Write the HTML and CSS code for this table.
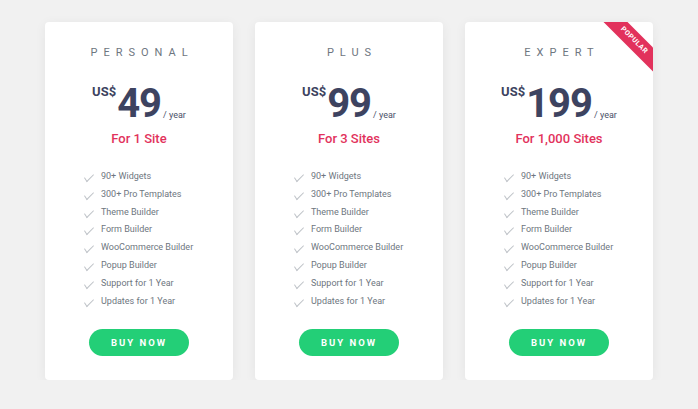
FILE: index.html
```html
<!DOCTYPE html>
<html lang="en">
<head>
  <meta charset="UTF-8" />
  <title>Pricing</title>
  <link rel="stylesheet" href="styles.css">
</head>
<body>
  <div class="plans">
    <div class="card">
      <h3 class="plan-name">Personal</h3>
      <div class="price"><span class="cur">US$</span><span class="amount">49</span><span class="per">/ year</span></div>
      <p class="sites">For 1 Site</p>
      <ul class="features">
        <li>90+ Widgets</li>
        <li>300+ Pro Templates</li>
        <li>Theme Builder</li>
        <li>Form Builder</li>
        <li>WooCommerce Builder</li>
        <li>Popup Builder</li>
        <li>Support for 1 Year</li>
        <li>Updates for 1 Year</li>
      </ul>
      <a class="buy" href="#">Buy Now</a>
    </div>

    <div class="card">
      <h3 class="plan-name">Plus</h3>
      <div class="price"><span class="cur">US$</span><span class="amount">99</span><span class="per">/ year</span></div>
      <p class="sites">For 3 Sites</p>
      <ul class="features">
        <li>90+ Widgets</li>
        <li>300+ Pro Templates</li>
        <li>Theme Builder</li>
        <li>Form Builder</li>
        <li>WooCommerce Builder</li>
        <li>Popup Builder</li>
        <li>Support for 1 Year</li>
        <li>Updates for 1 Year</li>
      </ul>
      <a class="buy" href="#">Buy Now</a>
    </div>

    <div class="card">
      <div class="ribbon">Popular</div>
      <h3 class="plan-name">Expert</h3>
      <div class="price"><span class="cur">US$</span><span class="amount">199</span><span class="per">/ year</span></div>
      <p class="sites">For 1,000 Sites</p>
      <ul class="features">
        <li>90+ Widgets</li>
        <li>300+ Pro Templates</li>
        <li>Theme Builder</li>
        <li>Form Builder</li>
        <li>WooCommerce Builder</li>
        <li>Popup Builder</li>
        <li>Support for 1 Year</li>
        <li>Updates for 1 Year</li>
      </ul>
      <a class="buy" href="#">Buy Now</a>
    </div>
  </div>
</body>
</html>
```

FILE: styles.css
```css
body {
  margin: 0;
  font-family: Roboto, 'Liberation Sans', sans-serif;
  background: #f1f1f1;
}
.plans {
  display: flex;
  justify-content: center;
  gap: 22px;
  padding-top: 22px;
}
.card {
  position: relative;
  overflow: hidden;
  width: 188px;
  height: 358px;
  box-sizing: border-box;
  background: #fff;
  border-radius: 4px;
  box-shadow: 0 2px 12px rgba(0, 0, 0, 0.06);
  display: flex;
  flex-direction: column;
  align-items: center;
}
.plan-name {
  margin: 24px 0 0;
  padding-left: 6px;
  font-size: 11px;
  font-weight: 400;
  letter-spacing: 6px;
  text-transform: uppercase;
  color: #6e7680;
  line-height: 14px;
}
.price {
  display: flex;
  align-items: flex-start;
  margin-top: 24px;
  color: #3d4360;
}
.cur {
  font-size: 13px;
  font-weight: 700;
  line-height: 16px;
  margin-top: 0;
  margin-right: 1px;
}
.amount {
  font-size: 40px;
  font-weight: 700;
  letter-spacing: -1px;
  line-height: 40px;
}
.per {
  align-self: flex-end;
  font-size: 9px;
  line-height: 12px;
  margin-bottom: 3px;
  margin-left: 2px;
  color: #4a5068;
}
.sites {
  margin: 7px 0 0;
  font-size: 13px;
  font-weight: 500;
  color: #e2325c;
  line-height: 16px;
}
.features {
  list-style: none;
  margin: 21px 0 0;
  padding: 0 0 0 37px;
  align-self: stretch;
}
.features li {
  position: relative;
  padding-left: 19px;
  font-size: 9px;
  line-height: 17.8px;
  color: #6e7680;
}
.features li::before {
  content: "";
  position: absolute;
  left: 2px;
  top: 6px;
  width: 9px;
  height: 4px;
  border-left: 1px solid #bfc3c8;
  border-bottom: 1px solid #bfc3c8;
  transform: rotate(-45deg) skewX(-12deg);
}
.buy {
  margin-top: 19px;
  width: 100px;
  height: 27px;
  line-height: 27px;
  border-radius: 14px;
  background: #23cf77;
  color: #fff;
  text-align: center;
  text-decoration: none;
  text-transform: uppercase;
  font-size: 9.5px;
  font-weight: 700;
  letter-spacing: 2px;
}
.ribbon {
  position: absolute;
  top: 10px;
  right: -31px;
  width: 100px;
  height: 17px;
  line-height: 17px;
  background: #e2325c;
  color: #fff;
  text-align: center;
  text-transform: uppercase;
  font-size: 7px;
  font-weight: 700;
  letter-spacing: 0.5px;
  transform: rotate(45deg);
}
```
